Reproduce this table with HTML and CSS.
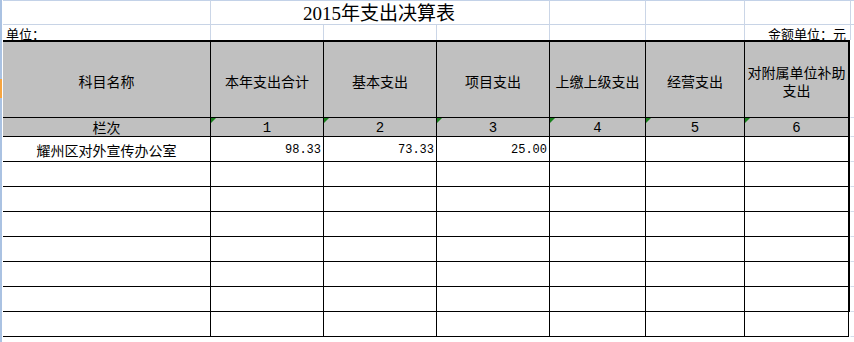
FILE: index.html
```html
<!DOCTYPE html>
<html lang="zh-CN">
<head>
<meta charset="utf-8">
<title>2015年支出决算表</title>
<link rel="stylesheet" href="styles.css">
</head>
<body>
<div class="sheet">
  <div class="edge"><div class="edge-mark"></div></div>
  <div class="main">
    <div class="top">
      <div class="g title-row"></div>
      <div class="g gl title-row title">2015年支出决算表</div>
      <div class="g gl title-row"></div>
      <div class="g gl title-row"></div>
      <div class="g gl title-row"></div>
      <div class="g gl title-row"></div>

      <div class="g unit-row unit-left">单位：</div>
      <div class="g gl unit-row"></div>
      <div class="g gl unit-row"></div>
      <div class="g gl unit-row"></div>
      <div class="g gl unit-row"></div>
      <div class="g gl unit-row"></div>
      <div class="g gl unit-row unit-right">金额单位：元</div>
      <div class="g gl unit-row"></div>
    </div>

    <div class="grid">
      <div class="cell head first">科目名称</div>
      <div class="cell head">本年支出合计</div>
      <div class="cell head">基本支出</div>
      <div class="cell head">项目支出</div>
      <div class="cell head">上缴上级支出</div>
      <div class="cell head">经营支出</div>
      <div class="cell head last">对附属单位补助支出</div>
      <div class="pad"></div>

      <div class="cell idx first">栏次</div>
      <div class="cell idx num flag">1</div>
      <div class="cell idx num flag">2</div>
      <div class="cell idx num flag">3</div>
      <div class="cell idx num flag">4</div>
      <div class="cell idx num flag">5</div>
      <div class="cell idx num flag last">6</div>
      <div class="pad"></div>

      <div class="cell row first name">耀州区对外宣传办公室</div>
      <div class="cell row amount">98.33</div>
      <div class="cell row amount">73.33</div>
      <div class="cell row amount">25.00</div>
      <div class="cell row"></div>
      <div class="cell row"></div>
      <div class="cell row last"></div>
      <div class="pad"></div>

      <div class="cell row first"></div><div class="cell row"></div><div class="cell row"></div><div class="cell row"></div><div class="cell row"></div><div class="cell row"></div><div class="cell row last"></div><div class="pad"></div>
      <div class="cell row first"></div><div class="cell row"></div><div class="cell row"></div><div class="cell row"></div><div class="cell row"></div><div class="cell row"></div><div class="cell row last"></div><div class="pad"></div>
      <div class="cell row first"></div><div class="cell row"></div><div class="cell row"></div><div class="cell row"></div><div class="cell row"></div><div class="cell row"></div><div class="cell row last"></div><div class="pad"></div>
      <div class="cell row first"></div><div class="cell row"></div><div class="cell row"></div><div class="cell row"></div><div class="cell row"></div><div class="cell row"></div><div class="cell row last"></div><div class="pad"></div>
      <div class="cell row first"></div><div class="cell row"></div><div class="cell row"></div><div class="cell row"></div><div class="cell row"></div><div class="cell row"></div><div class="cell row last"></div><div class="pad"></div>
      <div class="cell row first"></div><div class="cell row"></div><div class="cell row"></div><div class="cell row"></div><div class="cell row"></div><div class="cell row"></div><div class="cell row last"></div><div class="pad"></div>
      <div class="cell row first"></div><div class="cell row"></div><div class="cell row"></div><div class="cell row"></div><div class="cell row"></div><div class="cell row"></div><div class="cell row last thin"></div><div class="pad"></div>
    </div>
  </div>
</div>
</body>
</html>
```

FILE: styles.css
```css
* { box-sizing: border-box; }

html, body {
  margin: 0;
  padding: 0;
  background: #ffffff;
}

body {
  width: 854px;
  height: 342px;
  overflow: hidden;
  font-family: "Noto Sans CJK SC", "Noto Sans", sans-serif;
  color: #000000;
}

.sheet {
  display: flex;
  height: 342px;
}

.edge {
  width: 2px;
  flex: 0 0 2px;
  background: #aac2e2;
}

.edge-mark {
  margin-top: 79px;
  height: 19px;
  background: #f7a540;
}

.main {
  flex: 1;
  margin-left: 1px;
}

/* top area with light gridlines */
.top {
  display: grid;
  grid-template-columns: 207px 113px 113px 113px 96px 99px 106px 1fr;
  grid-template-rows: 25px 15px;
}

.title-row {
  height: 25px;
  border-top: 1px solid #c3d2e8;
  border-bottom: 1px solid #c8d4e6;
}

.title-row.title { grid-column: 2 / span 3; }

.gl {
  border-left: 1px solid #cbd6e7;
}

.title {
  font-family: "Liberation Serif", "Noto Sans CJK SC", serif;
  font-size: 19px;
  line-height: 20px;
  padding-top: 3px;
  text-align: center;
  padding-right: 2px;
  white-space: nowrap;
}

.unit-row {
  height: 15px;
  font-size: 13px;
  line-height: 15px;
  padding-top: 1px;
  white-space: nowrap;
}

.unit-left {
  padding-left: 3px;
}

.unit-right {
  text-align: right;
  padding-right: 4px;
}

/* main bordered table */
.grid {
  display: grid;
  grid-template-columns: 207px 113px 113px 113px 96px 99px 106px 1fr;
  grid-template-rows: 78px 19px repeat(8, 25px);
}

.cell {
  border-left: 1px solid #000000;
  border-bottom: 1px solid #000000;
  display: flex;
  align-items: center;
  justify-content: center;
  text-align: center;
  font-size: 14px;
  position: relative;
}

.cell.first { border-left: 0; }

.cell.last { border-right: 2px solid #000000; }
.cell.last.thin { border-right: 1px solid #000000; margin-right: 1px; }

.head {
  border-top: 2px solid #000000;
  background: #c0c0c0;
  line-height: 18px;
  padding: 2px 2px 0;
}

.idx {
  background: #c0c0c0;
  line-height: 18px;
}

.num {
  font-family: "Liberation Mono", "DejaVu Sans Mono", monospace;
  font-size: 14px;
  padding-top: 1px;
}

.flag::before {
  content: "";
  position: absolute;
  top: 0;
  left: 0;
  width: 0;
  height: 0;
  border-top: 5px solid #17801a;
  border-right: 5px solid transparent;
}

.row {
  background: #ffffff;
}

.name {
  font-size: 14px;
  padding-top: 1px;
}

.amount {
  justify-content: flex-end;
  font-family: "Liberation Mono", "DejaVu Sans Mono", monospace;
  font-size: 12px;
  padding-right: 2px;
  padding-top: 2px;
}

.pad {
  border-bottom: 1px solid #d3dceb;
  border-left: 1px solid #ffffff;
}
```
